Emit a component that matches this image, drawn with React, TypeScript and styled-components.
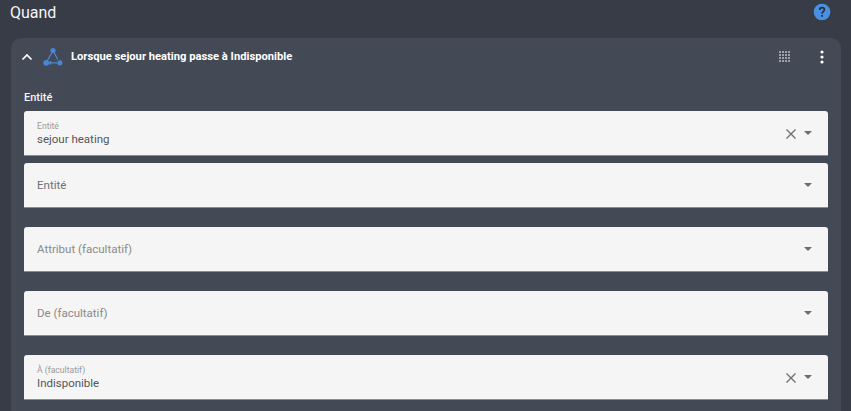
import React from "react";
import styled, { createGlobalStyle } from "styled-components";

const GlobalStyle = createGlobalStyle`
  html, body {
    margin: 0;
    padding: 0;
    height: 100%;
    overflow: hidden;
    background: #383c46;
  }
  * { box-sizing: border-box; }
`;

const Page = styled.div`
  width: 851px;
  height: 411px;
  overflow: hidden;
  padding: 0 10px 0 11px;
  font-family: Roboto, "Liberation Sans", sans-serif;
  background: #383c46;
`;

const Header = styled.header`
  height: 38px;
  display: flex;
  justify-content: space-between;
  align-items: flex-start;
  margin-left: -1px;
  padding: 1px 9px 0 0;
`;

const Title = styled.h1`
  margin: 0;
  font-size: 16px;
  font-weight: 400;
  line-height: 23px;
  color: #f4f5f6;
`;

const HelpIcon = styled.svg`
  width: 20px;
  height: 20px;
  margin-top: 1px;
  display: block;
`;

const Card = styled.section`
  background: #434955;
  border-radius: 10px 10px 0 0;
  padding: 0 13px 40px;
  height: 420px;
`;

const CardHead = styled.div`
  height: 37px;
  display: flex;
  align-items: center;
  margin: 0 -13px;
  padding: 0 12px 0 10px;
`;

const Chevron = styled.svg`
  width: 12px;
  height: 8px;
  margin-right: 10px;
  display: block;
`;

const StateIcon = styled.svg`
  width: 20px;
  height: 20px;
  margin-right: 8px;
  display: block;
`;

const CardTitle = styled.span`
  flex: 1;
  font-size: 11.2px;
  font-weight: 700;
  color: #ffffff;
`;

const GripIcon = styled.svg`
  width: 11px;
  height: 11px;
  margin-right: 30px;
  display: block;
`;

const MenuIcon = styled.svg`
  width: 4px;
  height: 14px;
  margin-right: 5px;
  display: block;
`;

const SectionLabel = styled.div`
  padding-top: 16px;
  height: 36px;
  font-size: 11px;
  font-weight: 500;
  line-height: 14px;
  color: #f4f5f6;
`;

const Form = styled.div`
  display: flex;
  flex-direction: column;
  gap: 19px;
`;

const FieldGroup = styled.div`
  display: flex;
  flex-direction: column;
  gap: 7px;
`;

const Field = styled.div`
  height: 45px;
  display: flex;
  align-items: center;
  justify-content: space-between;
  padding: 0 16px 0 13px;
  background: #f5f5f5;
  border-radius: 3px 3px 0 0;
  border-bottom: 1px solid #8a8c90;
`;

const FieldText = styled.div`
  display: flex;
  flex-direction: column;
`;

const FloatLabel = styled.span`
  font-size: 8.6px;
  line-height: 10px;
  margin-top: 1px;
  color: #9a9a9a;
`;

const FieldValue = styled.span`
  font-size: 11.5px;
  line-height: 16px;
  color: #555555;
`;

const Placeholder = styled.span<{ $dim?: boolean }>`
  font-size: 11.5px;
  line-height: 16px;
  color: ${(p) => (p.$dim ? "#8a8a8a" : "#6f6f6f")};
`;

const FieldIcons = styled.div`
  display: flex;
  align-items: center;
  gap: 8px;
`;

const ClearIcon = styled.svg`
  width: 10px;
  height: 10px;
  margin-top: 2px;
  display: block;
`;

const CaretIcon = styled.svg`
  width: 8px;
  height: 4px;
  display: block;
`;

const Clear = () => (
  <ClearIcon viewBox="0 0 10 10">
    <path d="M0.5 0.5 9.5 9.5M9.5 0.5 0.5 9.5" stroke="#6e6e6e" strokeWidth="1.3" fill="none" />
  </ClearIcon>
);

const Caret = () => (
  <CaretIcon viewBox="0 0 8 4">
    <path d="M0 0h8L4 4z" fill="#6e6e6e" />
  </CaretIcon>
);

const gripDots = [0, 1, 2, 3].flatMap((r) => [0, 1, 2, 3].map((c) => [c, r]));

const App: React.FC = () => {
  return (
    <Page>
      <GlobalStyle />
      <Header>
        <Title>Quand</Title>
        <HelpIcon viewBox="0 0 24 24">
          <circle cx="12" cy="12" r="10" fill="#4a90e2" />
          <path
            d="M9.2 9.6c0-1.7 1.2-2.8 2.9-2.8 1.6 0 2.8 1 2.8 2.5 0 2.2-2.9 2.4-2.9 4.7"
            fill="none"
            stroke="#2b3038"
            strokeWidth="2"
          />
          <rect x="11" y="15.6" width="2.1" height="2.1" fill="#2b3038" />
        </HelpIcon>
      </Header>
      <Card>
        <CardHead>
          <Chevron viewBox="0 0 12 8">
            <path d="M1.5 6.5 6 2l4.5 4.5" fill="none" stroke="#fff" strokeWidth="1.7" />
          </Chevron>
          <StateIcon viewBox="0 0 20 20">
            <g fill="#4a86d4">
              <circle cx="10" cy="3.5" r="2.6" />
              <circle cx="3.2" cy="15.8" r="2.9" />
              <circle cx="16.8" cy="15.8" r="2.6" />
            </g>
            <path
              d="M9.2 5 4.2 14M10.8 5l4 7.5M6.5 15.8h7.5M8 14.2 6.2 15.8 8 17.4"
              fill="none"
              stroke="#4a86d4"
              strokeWidth="1.3"
            />
          </StateIcon>
          <CardTitle>Lorsque sejour heating passe à Indisponible</CardTitle>
          <GripIcon viewBox="0 0 11 11">
            {gripDots.map(([c, r]) => (
              <rect key={`${c}-${r}`} x={c * 3 + 0.2} y={r * 3 + 0.2} width="1.6" height="1.6" fill="#cfd1d6" />
            ))}
          </GripIcon>
          <MenuIcon viewBox="0 0 4 14">
            <circle cx="2" cy="2" r="1.6" fill="#fff" />
            <circle cx="2" cy="7" r="1.6" fill="#fff" />
            <circle cx="2" cy="12" r="1.6" fill="#fff" />
          </MenuIcon>
        </CardHead>
        <SectionLabel>Entité</SectionLabel>
        <Form>
          <FieldGroup>
            <Field>
              <FieldText>
                <FloatLabel>Entité</FloatLabel>
                <FieldValue>sejour heating</FieldValue>
              </FieldText>
              <FieldIcons>
                <Clear />
                <Caret />
              </FieldIcons>
            </Field>
            <Field>
              <Placeholder>Entité</Placeholder>
              <Caret />
            </Field>
          </FieldGroup>
          <Field>
            <Placeholder $dim>Attribut (facultatif)</Placeholder>
            <Caret />
          </Field>
          <Field>
            <Placeholder $dim>De (facultatif)</Placeholder>
            <Caret />
          </Field>
          <Field>
            <FieldText>
              <FloatLabel>À (facultatif)</FloatLabel>
              <FieldValue>Indisponible</FieldValue>
            </FieldText>
            <FieldIcons>
              <Clear />
              <Caret />
            </FieldIcons>
          </Field>
        </Form>
      </Card>
    </Page>
  );
};

export default App;
